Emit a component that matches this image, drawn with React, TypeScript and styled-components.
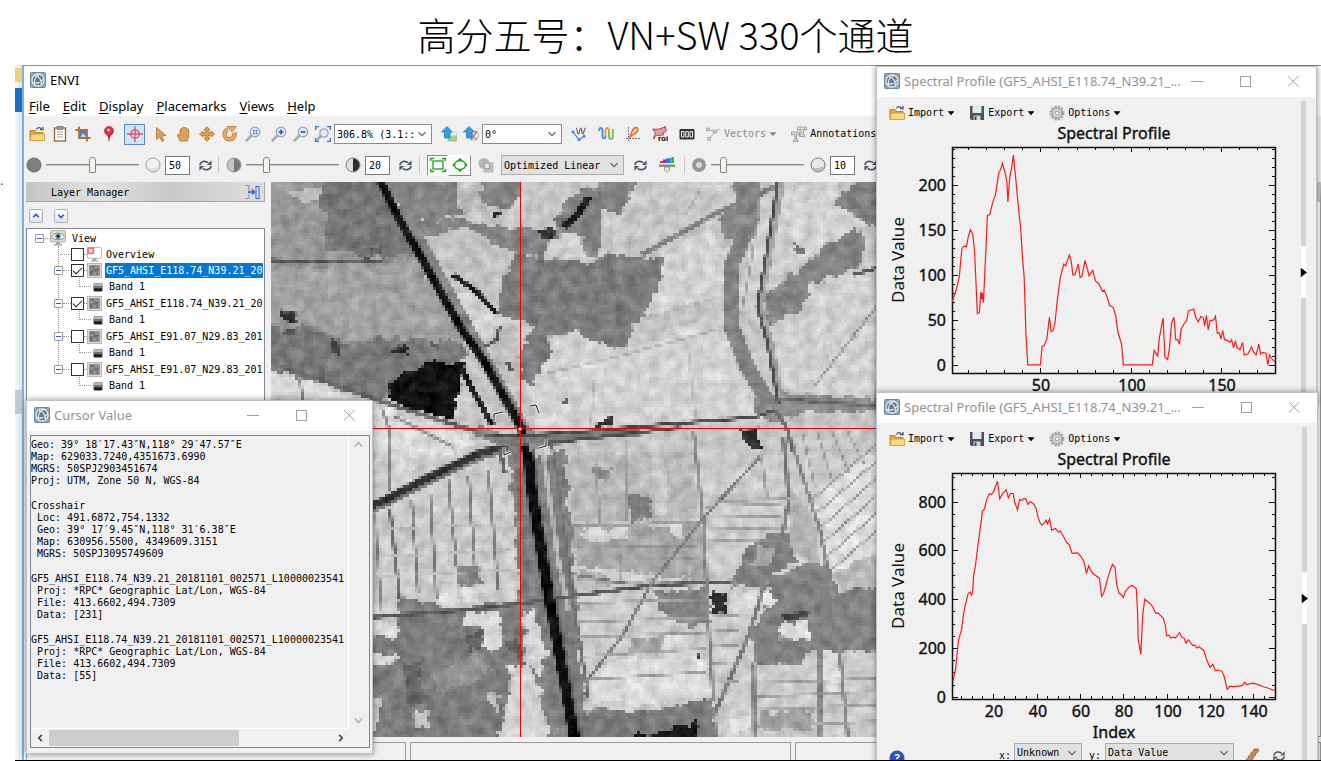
import React from "react";
import styled, { createGlobalStyle, css } from "styled-components";

const mono = `"DejaVu Sans Mono", "Liberation Mono", monospace`;
const sans = `"Noto Sans", "Open Sans", "Noto Sans CJK SC", sans-serif`;

const GlobalStyle = createGlobalStyle`
  * { box-sizing: border-box; }
  body { margin: 0; background: #fff; color: #000; font-family: ${sans}; }
  button, input, select { font: inherit; color: inherit; margin: 0; padding: 0; }
  ul { list-style: none; margin: 0; padding: 0; }
`;

/* ---------- page ---------- */

const Slide = styled.main`
  display: grid;
  grid-template-rows: 65px minmax(0, 1fr);
  height: 100vh;
  overflow: hidden;
`;

const SlideTitle = styled.h1`
  margin: 0;
  padding: 6px 0 0 10px;
  text-align: center;
  font-family: "Noto Sans CJK SC", sans-serif;
  font-weight: 300;
  font-size: 38px;
  line-height: 56px;
`;

const Stage = styled.div`
  display: grid;
  grid-template-columns: 15px minmax(0, 1fr);
  min-height: 0;
`;

const Margin = styled.div`
  padding-top: 108px;
  color: #1a1ae0;
  font-size: 12px;
  line-height: 16px;
`;

const Desktop = styled.div`
  position: relative;
  display: flex;
  min-height: 0;
  border-bottom: 1px solid #000;
  overflow: hidden;
`;

const BackStrip = styled.div`
  display: flex;
  flex-direction: column;
  flex: none;
  width: 7px;
  background: linear-gradient(90deg, #f6f8f9, #dfe4e8);
`;

const StripBlock = styled.div<{ $h: number; $c?: string }>`
  height: ${(p) => p.$h}px;
  background: ${(p) => p.$c ?? "transparent"};
`;

/* ---------- main window ---------- */

const MainWindow = styled.section`
  display: flex;
  flex-direction: column;
  flex: 1;
  min-width: 0;
  border-top: 1px solid #5f9fd6;
  border-left: 2px solid #78b3e4;
  background: #f0f0f0;
`;

const MainTitle = styled.header`
  display: flex;
  align-items: center;
  gap: 4px;
  flex: none;
  height: 28px;
  padding-left: 6px;
  background: #fff;
  font-size: 13px;
`;

const MenuBar = styled.nav`
  display: flex;
  align-items: center;
  gap: 13px;
  flex: none;
  height: 22px;
  padding: 3px 0 0 5px;
  background: #fff;
`;

const MenuItem = styled.button`
  border: 0;
  background: none;
  font-size: 13px;
  line-height: 19px;
  u { text-underline-offset: 2px; }
`;

const Toolbar = styled.div<{ $h: number; $bottom?: number }>`
  display: flex;
  align-items: center;
  flex: none;
  height: ${(p) => p.$h}px;
  padding: 0 0 ${(p) => p.$bottom ?? 0}px 1px;
  overflow: hidden;
  font-family: ${mono};
  font-size: 10px;
`;

const ToolGroup = styled.div<{ $before?: number }>`
  display: flex;
  align-items: center;
  flex: none;
  margin-left: ${(p) => p.$before ?? 0}px;
`;

const ToolButton = styled.button<{ $w?: number; $look?: "active" | "sunken" | "raised" }>`
  display: grid;
  place-items: center;
  flex: none;
  width: ${(p) => p.$w ?? 23}px;
  height: 21px;
  border: 1px solid transparent;
  background: none;
  ${(p) => p.$look === "active" && css`border-color: #5b8fbf; background: #cce4f7;`}
  ${(p) => p.$look === "sunken" && css`border-color: #8c8c8c #fff #fff #8c8c8c; background: #fafafa;`}
  ${(p) => p.$look === "raised" && css`border-color: #fff #8c8c8c #8c8c8c #fff; background: #fafafa;`}
`;

const LabelButton = styled.button<{ $muted?: boolean }>`
  display: flex;
  align-items: center;
  flex: none;
  gap: 3px;
  border: 0;
  background: none;
  color: ${(p) => (p.$muted ? "#8a8a8a" : "#000")};
  font-family: ${mono};
  font-size: 10px;
  line-height: 16px;
  white-space: nowrap;
`;

const Separator = styled.span`
  width: 1px;
  height: 16px;
  flex: none;
  background: #c4c4c4;
`;

const SelectBox = styled.label<{ $w: number; $gray?: boolean }>`
  display: grid;
  grid-template-columns: minmax(0, 1fr) 16px;
  align-items: center;
  flex: none;
  width: ${(p) => p.$w}px;
  height: 20px;
  border: 1px solid ${(p) => (p.$gray ? "#adadad" : "#8a8a8a")};
  background: ${(p) => (p.$gray ? "#e1e1e1" : "#fff")};
  select {
    grid-area: 1 / 1 / 2 / 3;
    width: 100%;
    height: 18px;
    padding-left: 2px;
    border: 0;
    background: none;
    appearance: none;
    font-family: ${mono};
    font-size: 10px;
  }
  svg { grid-area: 1 / 2; pointer-events: none; }
`;

const NumberField = styled.input`
  width: 25px;
  height: 19px;
  flex: none;
  padding-left: 3px !important;
  border: 1px solid #7a7a7a;
  background: #fff;
  font-family: ${mono};
  font-size: 10px !important;
`;

const Range = styled.input`
  appearance: none;
  width: 93px;
  height: 18px;
  flex: none;
  background: none;
  &::-webkit-slider-runnable-track {
    height: 2px;
    background: #8d8b80;
    border-bottom: 1px solid #c9c8c0;
  }
  &::-webkit-slider-thumb {
    appearance: none;
    width: 7px;
    height: 16px;
    margin-top: -7px;
    border: 1px solid #85867d;
    border-radius: 3px 3px 1px 1px;
    background: #f4f3ec;
  }
`;

const Workspace = styled.div`
  display: grid;
  grid-template-columns: 239px minmax(0, 1fr) 240px;
  column-gap: 6px;
  flex: 1;
  min-height: 0;
  padding-left: 2px;
`;

const LayerPanel = styled.aside`
  display: flex;
  flex-direction: column;
  min-height: 0;
  font-family: ${mono};
  font-size: 10px;
`;

const PanelHeader = styled.div`
  display: flex;
  align-items: center;
  justify-content: space-between;
  flex: none;
  height: 20px;
  padding: 1px 4px 0 25px;
  border-bottom: 1px solid #a6a6a6;
  border-right: 1px solid #a6a6a6;
  background: linear-gradient(90deg, #c4c4c4, #e2e2e2 30%, #c9c9c9 60%, #dedede);
`;

const OrderButtons = styled.div`
  display: flex;
  align-items: center;
  gap: 11px;
  flex: none;
  height: 26px;
  padding: 2px 0 0 3px;
`;

const OrderButton = styled.button`
  display: grid;
  place-items: center;
  width: 14px;
  height: 14px;
  border: 1px solid #a9b2bd;
  border-radius: 2px;
  background: linear-gradient(#fff, #dfe5ee);
`;

const Tree = styled.div`
  flex: 1;
  min-height: 0;
  overflow: hidden;
  border: 1px solid #828790;
  background: #fff;
  padding: 1px 1px 0 8px;
`;

const TreeRow = styled.div<{ $h?: number }>`
  display: flex;
  align-items: center;
  height: ${(p) => p.$h ?? 16}px;
`;

const Branch = styled.ul`
  position: relative;
  padding-left: 19px;
  &::before {
    content: "";
    position: absolute;
    left: 23px;
    top: 0;
    height: 124px;
    border-left: 1px dotted #999;
  }
`;

const Expander = styled.button`
  position: relative;
  width: 9px;
  height: 9px;
  flex: none;
  border: 1px solid #9a9a9a;
  border-radius: 1px;
  background: #fff;
  &::after {
    content: "";
    position: absolute;
    inset: 3px 1px;
    background: #3c5fae;
  }
`;

const Dots = styled.span<{ $w: number; $before?: number }>`
  width: ${(p) => p.$w}px;
  flex: none;
  margin-left: ${(p) => p.$before ?? 0}px;
  border-top: 1px dotted #999;
`;

const Elbow = styled.span`
  align-self: flex-start;
  width: 12px;
  height: 9px;
  margin: 0 2px 0 25px;
  border: 1px dotted #999;
  border-width: 0 0 1px 1px;
`;

const Tick = styled.input`
  appearance: none;
  display: grid;
  place-items: center;
  width: 13px;
  height: 13px;
  flex: none;
  border: 1px solid #333;
  background: #fff;
  &:checked::after {
    content: "";
    width: 8px;
    height: 4px;
    margin-bottom: 2px;
    border: 1px solid #222;
    border-width: 0 0 1px 1px;
    transform: rotate(-45deg);
  }
`;

const LayerName = styled.label<{ $on?: boolean }>`
  flex: 1;
  min-width: 0;
  overflow: hidden;
  white-space: nowrap;
  line-height: 15px;
  margin-left: 3px;
  padding-left: 1px;
  ${(p) => p.$on && css`background: #0078d7; color: #fff;`}
`;

const NodeName = styled.span`
  margin-left: 6px;
`;

const MapView = styled.figure`
  margin: 0;
  min-height: 0;
  overflow: hidden;
  background: #aaa;
  svg { display: block; width: 100%; height: 100%; }
`;

const ToolboxPanel = styled.aside`
  border: 1px solid #9a9a9a;
  border-top: 20px solid #c6c6c6;
  background: #fff;
`;

const StatusBar = styled.footer`
  display: grid;
  grid-template-columns: 380px 381px minmax(0, 1fr);
  gap: 4px;
  flex: none;
  height: 23px;
  padding: 5px 0 0 2px;
`;

const StatusCell = styled.div`
  border: 1px solid #9b9b9b;
  border-bottom: 0;
`;

/* ---------- floating windows ---------- */

const FloatWindow = styled.section<{ $top: number; $left?: number; $right?: number; $w: number; $h: number }>`
  position: absolute;
  display: flex;
  flex-direction: column;
  top: ${(p) => p.$top}px;
  ${(p) => p.$left !== undefined && css`left: ${p.$left}px;`}
  ${(p) => p.$right !== undefined && css`right: ${p.$right}px;`}
  width: ${(p) => p.$w}px;
  height: ${(p) => p.$h}px;
  overflow: hidden;
  border: 1px solid #c2c2c2;
  background: #f0f0f0;
  box-shadow: 0 0 6px rgba(0, 0, 0, 0.45);
`;

const FloatTitle = styled.header`
  display: flex;
  align-items: center;
  flex: none;
  height: 30px;
  padding: 0 15px 2px 7px;
  background: #fff;
  color: #929292;
  font-size: 13px;
  line-height: 18px;
  white-space: nowrap;
  h2 { flex: 1; min-width: 0; margin: 0 0 0 4px; font: inherit; }
`;

const CaptionButtons = styled.div`
  display: flex;
  gap: 32px;
`;

const CaptionButton = styled.button`
  display: grid;
  place-items: center;
  width: 16px;
  height: 16px;
  border: 0;
  background: none;
  color: #a0a0a0;
`;

const Readout = styled.div`
  display: grid;
  grid-template: minmax(0, 1fr) 18px / minmax(0, 1fr) 20px;
  flex: 1;
  min-height: 0;
  margin: 4px 2px 5px 3px;
  border: 1px solid #828790;
`;

const ReadoutText = styled.div`
  display: flex;
  flex-direction: column;
  gap: 13px;
  overflow: hidden;
  padding: 3px 0 0 0;
  border-right: 1px solid #fff;
  border-bottom: 1px solid #fff;
  font-family: ${mono};
  font-size: 10px;
  line-height: 12px;
  white-space: pre;
`;

const SideScroll = styled.div`
  display: flex;
  flex-direction: column;
  justify-content: space-between;
  align-items: center;
  padding: 4px 2px 4px 0;
`;

const BottomScroll = styled.div`
  display: grid;
  grid-template-columns: 18px minmax(0, 1fr) 16px;
  align-items: center;
  justify-items: center;
`;

const ScrollThumb = styled.div`
  justify-self: start;
  width: 67%;
  height: 16px;
  background: #cdcdcd;
`;

const ProfileBody = styled.div`
  display: flex;
  flex: 1;
  min-height: 0;
`;

const ProfileMain = styled.div`
  flex: 1;
  min-width: 0;
  svg.plot { display: block; }
`;

const ProfileTools = styled.div`
  display: flex;
  align-items: center;
  gap: 14px;
  height: 25px;
  padding: 7px 0 0 12px;
`;

const Sash = styled.div`
  display: flex;
  flex-direction: column;
  flex: none;
  width: 5px;
  margin: 4px 10px 0 0;
  background: #d2d2d2;
`;

const SashHandle = styled.button`
  display: grid;
  place-content: center;
  width: 5px;
  height: 52px;
  margin-top: 145px;
  border: 0;
  background: #fff;
`;

const ProfileFooter = styled.div`
  display: flex;
  align-items: flex-start;
  padding-left: 12px;
  font-family: ${mono};
  font-size: 10px;
`;

const FooterPart = styled.span<{ $before: number; $top?: number }>`
  margin-left: ${(p) => p.$before}px;
  margin-top: ${(p) => p.$top ?? 6}px;
  line-height: 14px;
  display: flex;
`;

/* ---------- icons ---------- */

type IconName =
  | "logo" | "folder" | "clip" | "crop" | "pin" | "cross" | "arrow" | "hand" | "move" | "rotate"
  | "zoomBox" | "zoomIn" | "zoomOut" | "zoomFit" | "upImg" | "upNorth" | "specW" | "wave" | "scatter"
  | "roi" | "digits" | "vector" | "annot" | "refresh" | "rect" | "ellipse" | "gray" | "histo"
  | "disc" | "discLight" | "halfL" | "halfR" | "ring" | "discMid" | "chevron" | "dock" | "up" | "down"
  | "eye" | "overview" | "raster" | "band" | "save" | "gear" | "caret" | "help" | "brush"
  | "min" | "max" | "close" | "play" | "left" | "right" | "scrollUp" | "scrollDown";

const lens = (
  <>
    <path d="M1.500 14.500 6.500 9.500" stroke="#a9adb2" strokeWidth="2.600" strokeLinecap="round" />
    <circle cx="10" cy="6" r="4.800" fill="#dfeafc" stroke="#9aa3ad" strokeWidth="1.200" />
  </>
);

const art: Record<IconName, React.ReactNode> = {
  logo: (
    <>
      <rect x="0.5" y="0.5" width="15" height="15" rx="1" fill="#8fa6b5" stroke="#6f899a" />
      <circle cx="8" cy="8" r="6" fill="#5f7d91" stroke="#dfe8ee" strokeWidth="1.300" />
      <path d="M2.500 10.500C6 12 11 10.500 13.500 7M4.500 12.500C4 8 6 4 9.500 2.500M5 4c4 0 6.500 3.500 6.500 8.500" fill="none" stroke="#e9f0f4" strokeWidth="1.100" />
    </>
  ),
  folder: (
    <>
      <path d="M7.500 3.500c1-2.500 4-2.500 5 0M11 3.500h3V1" fill="none" stroke="#44566b" strokeWidth="1.300" />
      <path d="M1 14V4.500h5l1.500 2H14V14z" fill="#dca93c" stroke="#b98724" />
      <path d="M1 14.500 2 8H15.500V14.500z" fill="#f8d983" stroke="#c8962f" strokeWidth="0.800" />
    </>
  ),
  clip: (
    <>
      <rect x="2.500" y="2" width="11" height="13" fill="#fdfdfd" stroke="#9c6b3f" strokeWidth="1.400" />
      <rect x="5" y="0.500" width="6" height="3" fill="#999" stroke="#666" strokeWidth="0.600" />
      <path d="M5 6h6M5 8.500h6M5 11h6" stroke="#aaa" />
    </>
  ),
  crop: (
    <>
      <rect x="4.500" y="4.500" width="8" height="7" fill="#4d7fc0" />
      <path d="M5 11.500 8 7l4 4.500z" fill="#bcd8f0" />
      <path d="M0.500 4H12V15.500M4 0.500V12H15.500" fill="none" stroke="#a5703d" strokeWidth="1.800" />
    </>
  ),
  pin: (
    <>
      <path d="M8 8v7.500" stroke="#999" strokeWidth="1.600" />
      <circle cx="8" cy="5" r="4.600" fill="#e0323c" stroke="#b32029" strokeWidth="0.600" />
      <path d="M6 9h4l-2 5z" fill="#d02c36" />
      <circle cx="7.500" cy="4" r="1.500" fill="#f7c4c6" />
    </>
  ),
  cross: (
    <>
      <circle cx="8" cy="8" r="4.200" fill="none" stroke="#e0525c" strokeWidth="1.300" />
      <path d="M8 0v16M0 8h16" stroke="#e0525c" strokeWidth="1.300" />
    </>
  ),
  arrow: <path d="M3.500 1.500v12l3-2.500 2.500 4.500 2-1.200-2.300-4.300 4.300-.5z" fill="#dba15c" stroke="#a97336" strokeWidth="0.800" />,
  hand: <path d="M4 15C3 12 1 10 1.500 8.500 3 8 3.500 9 4 9.500L4 3.500C5 2.300 6 3 6 3.500V2C7 .8 8 1.300 8.200 2V1.800C9.500.8 10.300 1.500 10.400 3 11.500 2.200 12.600 3 12.700 4V10c0 2-1 3-1.400 5z" fill="#dfa15a" stroke="#b07536" strokeWidth="0.800" />,
  move: <path d="M8 .5 11 4H9.300v2.700H12V5l3.500 3L12 11V9.300H9.300V12H11l-3 3.500L5 12h1.700V9.300H4V11L.5 8 4 5v1.700h2.700V4H5z" fill="#e0a04f" stroke="#a96d2a" strokeWidth="0.800" />,
  rotate: (
    <>
      <path d="M12.300 6.500a5 5 0 1 1-6.500-3" fill="none" stroke="#b97a35" strokeWidth="4.400" />
      <path d="M12.300 6.500a5 5 0 1 1-6.500-3" fill="none" stroke="#e5ac66" strokeWidth="2.800" />
      <path d="M5 .5h9.500L10 6z" fill="#e5ac66" stroke="#b97a35" strokeWidth="0.800" />
      <circle cx="8" cy="8" r="2" fill="#f8ead6" />
    </>
  ),
  zoomBox: <>{lens}<path d="M8 4h1.500v1.500H8zM10.700 4h1.500v1.500h-1.500zM8 6.700h1.500v1.500H8zM10.700 6.700h1.500v1.500h-1.500z" fill="#2b5fc0" /></>,
  zoomIn: <>{lens}<path d="M10 3.500v5M7.500 6h5" stroke="#2b50b8" strokeWidth="1.600" /></>,
  zoomOut: <>{lens}<path d="M7.500 6h5" stroke="#2b50b8" strokeWidth="1.600" /></>,
  zoomFit: (
    <>
      <path d="M3 13 6 10" stroke="#a9adb2" strokeWidth="2.600" strokeLinecap="round" />
      <circle cx="9" cy="7" r="4.200" fill="#dfeafc" stroke="#9aa3ad" strokeWidth="1.200" />
      <path d="M.7 4V.7H4M12 .7h3.300V4M15.300 12v3.300H12M4 15.300H.7V12" fill="none" stroke="#2b6fdc" strokeWidth="1.300" />
    </>
  ),
  upImg: (
    <>
      <rect x="7" y="7" width="8.500" height="8" fill="#a9cf7c" stroke="#8aa" strokeWidth="0.600" />
      <path d="M7 10c3-2 6 1 8.500-1V7H7z" fill="#e6eaf0" />
      <path d="M6 .5 11.500 6H9v6H3.500V6H.5z" fill="#2f9fe0" stroke="#1e78b8" strokeWidth="0.700" />
    </>
  ),
  upNorth: (
    <>
      <circle cx="11" cy="9.500" r="4.500" fill="#e8edf2" stroke="#9ab" strokeWidth="0.800" />
      <path d="M8 14l6-9" stroke="#d9534f" strokeWidth="1.300" />
      <path d="M14 14 9 8" stroke="#6b7a88" />
      <path d="M6 .5 11.500 6H9v6H3.500V6H.5z" fill="#2f9fe0" stroke="#1e78b8" strokeWidth="0.700" />
    </>
  ),
  specW: (
    <>
      <path d="M5 2c1.500 0 1 6 2.500 6S8.500 2 9.700 2s1 6 2.300 6 .500-6 3-6" fill="none" stroke="#666" strokeWidth="1.200" />
      <path d="M2 6 8 14l5-4" fill="none" stroke="#3d7be0" strokeWidth="1.200" />
      <path d="M.8 4.800h2.400v2.400H.8zM6.800 12.600h2.400V15H6.800zM12 9h2.400v2.400H12z" fill="#3d7be0" />
    </>
  ),
  wave: (
    <>
      <path d="M1 5c0-4 3.500-4 3.500 0v5c0 3 3 3 3 0" fill="none" stroke="#4b8fe0" strokeWidth="1.900" />
      <path d="M7.500 10V5c0-4 3.500-4 3.500 0" fill="none" stroke="#e7a13a" strokeWidth="1.900" />
      <path d="M11 5v5c0 4 3.800 4 3.800 0V3" fill="none" stroke="#7bbf4a" strokeWidth="1.900" />
    </>
  ),
  scatter: (
    <>
      <path d="M3.500 1v14M1 12.500h14" stroke="#777" strokeDasharray="2 1" />
      <path d="M4.500 11.500C6 9 7 2 10.500 1.500c3 0 3 3 1 5s-4.500 2-7 5z" fill="#fbd58c" stroke="#e4612d" strokeWidth="1.300" />
    </>
  ),
  roi: (
    <>
      <path d="M1.500 3.500 7 3l6-2 1.500 4-3.500 2 .5 2-6.500.5-3 1.500 1.500-4z" fill="#e79ba3" stroke="#b8505c" strokeWidth="1" />
      <path d="M.5 2.500h2v2h-2zM12 .2h2v2h-2zM1 11h2v2H1z" fill="#b8505c" />
      <text x="6" y="15" fontSize="8" fontWeight="700" fontFamily="Liberation Sans, sans-serif">roi</text>
    </>
  ),
  digits: (
    <>
      <rect x="0.500" y="3" width="15" height="10.500" rx="1" fill="#333" />
      <path d="M2.500 5.500h2.500v5.500H2.500zM6.800 5.500h2.500v5.500H6.800zM11 5.500h2.500v5.500H11z" fill="none" stroke="#f4f4f4" />
    </>
  ),
  vector: (
    <>
      <path d="M3 3.500 10 5.500 4 13M10 5.500 14.500 3" fill="none" stroke="#aaa" />
      <path d="M1.700 2.200h2.600v2.600H1.700zM8.700 4.200h2.600v2.600H8.700zM2.700 11.500h2.600v2.600H2.700z" fill="#f4f4f4" stroke="#999" />
    </>
  ),
  annot: <path d="M6.500 1h9v3h-2V3h-1.200v6h1.200v1.500H8.700V9h1.200V3H8.500v1h-2zM.5 6h8v3H7V8H5.500v6H7v1.500H2.500V14H4V8H2v1H.5z" fill="#e6e6e6" stroke="#8c8c8c" strokeWidth="0.800" />,
  refresh: (
    <>
      <path d="M2 7.500C2.500 4 7 2 11 5" fill="none" stroke="#4d5666" strokeWidth="1.800" />
      <path d="M14 8.500C13.500 12 9 14 5 11" fill="none" stroke="#4d5666" strokeWidth="1.800" />
      <path d="M14.500 2.500V7.500H9.500zM1.500 13.500V8.500H6.500z" fill="#4d5666" />
    </>
  ),
  rect: (
    <>
      <rect x="3" y="4" width="10" height="8" fill="none" stroke="#1fa51f" strokeWidth="1.300" />
      <path d="M.7 4V1.500H4M12 1.500h3.300V4M15.300 12v2.500H12M4 14.500H.7V12" fill="none" stroke="#1fa51f" strokeWidth="1.400" />
    </>
  ),
  ellipse: (
    <>
      <ellipse cx="8" cy="8" rx="5.500" ry="4.500" fill="none" stroke="#1fa51f" strokeWidth="1.400" />
      <path d="M6 3 8 .8 10 3zM6 13l2 2.200L10 13zM2.300 6v4L.3 8zM13.700 6v4l2-2z" fill="#1fa51f" />
    </>
  ),
  gray: (
    <>
      <circle cx="6" cy="6.500" r="5.500" fill="#b4b4b4" />
      <path d="M7 5h8.500v10.500H5z" fill="#bdbdbd" />
      <circle cx="9" cy="9" r="3" fill="#e4e4e4" stroke="#999" />
    </>
  ),
  histo: (
    <>
      <path d="M1 6V4h3v2z" fill="#e33" /><path d="M4 6V2.500h3V6z" fill="#e0a" />
      <path d="M7 6V1.500h3V6z" fill="#2b6fdc" /><path d="M10 6V1h2.500v5z" fill="#18a0d0" /><path d="M12.500 6V0H15v6z" fill="#3b3" />
      <path d="M0 7.500h16v2.500H0z" fill="#8b8b8b" />
      <path d="M5.500 10h5v3L8 15.500 5.500 13z" fill="#e5e5e5" stroke="#888" strokeWidth="0.800" />
    </>
  ),
  disc: <circle cx="8" cy="8" r="7" fill="#808080" stroke="#6a6a6a" />,
  discLight: <><circle cx="8" cy="8" r="7" fill="#f4f4f4" stroke="#9a9a9a" /><path d="M2 10a6.300 6.300 0 0 0 12-1C10 12 5 12 2 10z" fill="#dcdcdc" /></>,
  halfL: <><circle cx="8" cy="8" r="7" fill="#c4c4c4" stroke="#909090" /><path d="M8 1.500a6.500 6.500 0 0 1 0 13z" fill="#777" /></>,
  halfR: <><circle cx="8" cy="8" r="7" fill="#e0e0e0" stroke="#808080" /><path d="M8 1.500a6.500 6.500 0 0 1 0 13z" fill="#2c2c34" /></>,
  ring: <circle cx="8" cy="8" r="5" fill="#d8d8d8" stroke="#979797" strokeWidth="4" />,
  discMid: <><circle cx="8" cy="8" r="7" fill="#e8e8e8" stroke="#777" /><path d="M2 10a6.300 6.300 0 0 0 12-1C10 11 5 12 2 10z" fill="#bbb" /></>,
  chevron: <path d="M4 6l4 4 4-4" fill="none" stroke="#666" strokeWidth="1.400" />,
  dock: (
    <>
      <path d="M1 1.500h4v13H1M5 4V1.500" fill="none" stroke="#999" />
      <path d="M4 8h6M8 5.500 10.500 8 8 10.500" fill="none" stroke="#3a62c8" strokeWidth="1.600" />
      <rect x="12" y="2.500" width="3" height="12" fill="#dfe8fb" stroke="#3a62c8" />
    </>
  ),
  up: <path d="M3.500 10 8 5.500l4.500 4.500" fill="none" stroke="#2f55b8" strokeWidth="2.600" />,
  down: <path d="M3.500 6 8 10.500 12.500 6" fill="none" stroke="#2f55b8" strokeWidth="2.600" />,
  scrollUp: <path d="M1.500 12 8 4l6.500 8" fill="none" stroke="#b4b4b4" strokeWidth="3" />,
  scrollDown: <path d="M1.500 4 8 12l6.500-8" fill="none" stroke="#b4b4b4" strokeWidth="3" />,
  eye: (
    <>
      <rect x="0.500" y="0.500" width="15" height="11.500" rx="1" fill="#ddd8cc" stroke="#bbb6aa" />
      <path d="M1.500 7C4 2 12 2 14.500 7 12 10.500 4 10.500 1.500 7z" fill="#fff" stroke="#777" strokeWidth="0.800" />
      <circle cx="8" cy="6.300" r="2.800" fill="#5c95a8" /><circle cx="8" cy="6.300" r="1.200" fill="#111" />
      <path d="M6 12h4v2H6zM4 14h8v1.500H4z" fill="#aaa" />
    </>
  ),
  overview: (
    <>
      <rect x="0.500" y="0.500" width="15" height="11.500" rx="1" fill="#fff" stroke="#bbb0a8" />
      <rect x="1.200" y="1.200" width="5.600" height="5.600" fill="#ffe97a" stroke="#f06292" strokeWidth="1.600" />
      <path d="M6 12h4v2H6zM4 14h8v1.500H4z" fill="#aaa" />
    </>
  ),
  raster: (
    <>
      <rect x="0.500" y="0.500" width="15" height="15" fill="#ddd" stroke="#b5b5b5" />
      <rect x="2.500" y="2.500" width="11" height="11" fill="#707070" />
      <path d="M3 5h4v3H3zM8 3h5v3H8zM6 9h4v4H6zM11 8h2v4h-2z" fill="#929292" />
    </>
  ),
  band: (
    <>
      <rect x="1" y="2" width="14" height="13" rx="2" fill="#222" />
      <path d="M3 2h10a2 2 0 0 1 2 2v3H1V4a2 2 0 0 1 2-2z" fill="#b8b8b8" />
      <path d="M1 7h14v3H1z" fill="#777" />
    </>
  ),
  save: (
    <>
      <path d="M1 1h14v14H2.500L1 13.500z" fill="#4b5157" />
      <rect x="3.500" y="1" width="9" height="7" fill="#dfeaf3" />
      <rect x="4.500" y="10.500" width="7" height="4.500" fill="#d8d8d8" /><path d="M5.500 11.500h2V15h-2z" fill="#444" />
    </>
  ),
  gear: (
    <>
      <circle cx="8" cy="8" r="6.200" fill="none" stroke="#a4a4a4" strokeWidth="2.600" strokeDasharray="2.200 1.050" />
      <circle cx="8" cy="8" r="4.800" fill="#d6d6d6" stroke="#9b9b9b" />
      <circle cx="8" cy="8" r="2" fill="#f4f4f4" stroke="#9b9b9b" />
    </>
  ),
  caret: <path d="M1 4.500h14L8 12.500z" fill="currentColor" />,
  help: (
    <>
      <circle cx="8" cy="8" r="7.500" fill="#2950c8" />
      <text x="8" y="12" textAnchor="middle" fontSize="11" fontWeight="700" fill="#fff" fontFamily="Noto Sans, sans-serif">?</text>
    </>
  ),
  brush: <path d="M14.500 1H10L9 3.500 7 4.500 6.500 7l-2 1L4 10.500 2 11.500V15.500l4-1L7 12l2-1 .500-2.500 2-1L12 5l2-1z" fill="#c98648" stroke="#8f5525" strokeWidth="0.700" />,
  min: <path d="M2 8.500h12" stroke="currentColor" strokeWidth="1" />,
  max: <rect x="3.500" y="3.500" width="10" height="10" fill="none" stroke="currentColor" />,
  close: <path d="M3 3l10.500 10.500M13.500 3L3 13.500" stroke="currentColor" />,
  play: <path d="M4 1v14l9-7z" fill="#000" />,
  left: <path d="M11 3 6 8l5 5" fill="none" stroke="#444" strokeWidth="2.600" />,
  right: <path d="M5 3l5 5-5 5" fill="none" stroke="#444" strokeWidth="2.600" />,
};

const Icon = ({ name, size = 16 }: { name: IconName; size?: number }) => (
  <svg width={size} height={size} viewBox="0 0 16 16" aria-hidden="true">
    {art[name]}
  </svg>
);

const Tool = ({ icon, w, look, size }: { icon: IconName; w?: number; look?: "active" | "sunken" | "raised"; size?: number }) => (
  <ToolButton type="button" $w={w} $look={look} aria-label={icon}>
    <Icon name={icon} size={size} />
  </ToolButton>
);

const Select = ({ w, value, label, gray }: { w: number; value: string; label: string; gray?: boolean }) => (
  <SelectBox $w={w} $gray={gray}>
    <select aria-label={label} defaultValue={value}>
      <option>{value}</option>
    </select>
    <Icon name="chevron" size={14} />
  </SelectBox>
);

/* ---------- satellite view ---------- */

type Line = [color: string, width: number, points: string];
type Patch = [color: string, points: string];

const northPatches: Patch[] = [
  ["#c6c6c6", "-100,-100 2300,-100 2300,1000 -100,1000"],
  ["#989898", "-60,-60 150,-60 160,210 380,215 420,300 505,470 520,520 310,660 -60,540"],
  ["#777", "150,-60 260,-60 345,120 385,225 300,235 160,205 145,60"],
  ["#858585", "270,-60 480,-60 500,100 420,130 360,110"],
  ["#bcbcbc", "50,45 105,12 150,30 145,70 110,75"],
  ["#a2a2a2", "-60,262 300,262 365,225 420,310 490,440 480,480 340,470 200,480 120,430 -60,420"],
  ["#797979", "-60,445 100,440 200,485 340,478 500,482 515,520 330,640 280,655 -60,545"],
  ["#828282", "550,-60 670,-60 650,60 600,85 550,60"],
  ["#b8b8b8", "490,20 550,15 560,80 510,100"],
  ["#828282", "380,130 490,120 570,130 650,150 700,190 720,235 600,200 490,150 400,170"],
  ["#808080", "650,140 740,150 760,60 830,30 870,60 850,230 720,215 640,190"],
  ["#828282", "850,-60 970,-60 925,60 900,105 850,90"],
  ["#d0d0d0", "715,200 760,160 815,170 815,235 740,225"],
  ["#d4d4d4", "870,110 905,130 895,190 865,160"],
  ["#c2c2c2", "430,180 480,145 560,160 620,260 590,380 540,320 480,280 410,200"],
  ["#7c7c7c", "640,220 720,235 830,250 870,220 960,240 1030,230 1010,320 980,350 1005,385 945,430 915,512 850,490 760,455 725,470 720,540 700,620 655,600 650,500 690,440 595,395 600,330"],
  ["#d2d2d2", "735,480 790,460 920,520 1080,440 1170,440 1200,560 1260,660 1240,710 1000,735 700,765 680,640"],
  ["#d2d2d2", "1030,220 1130,130 1170,200 1175,340 960,410 1000,340"],
  ["#888", "1190,-60 1260,-60 1270,80 1240,190 1170,180 1150,120 1200,70"],
  ["#d0d0d0", "1265,60 1300,50 1260,380 1215,390 1235,200"],
  ["#d2d2d2", "1340,20 1450,0 1480,70 1540,130 1470,170 1360,260 1280,320 1310,60"],
  ["#848484", "1275,350 1380,250 1450,180 1500,150 1530,180 1515,260 1450,290 1385,350 1370,390 1280,450"],
  ["#7f7f7f", "1450,60 1500,20 1560,-60 2100,-60 2100,130 1540,135 1500,100"],
  ["#d0d0d0", "1290,460 1400,400 1390,310 1480,280 1555,300 1560,660 1400,640 1310,620"],
  ["#8c8c8c", "1240,650 1320,640 1600,660 1600,690 1380,700 1300,730 1240,700"],
  ["#dcdcdc", "-60,560 130,610 290,680 500,760 540,790 400,870 -60,870"],
  ["#121212", "315,660 315,620 350,580 430,550 505,545 497,640 480,718 410,700 350,680"],
  ["#c4c4c4", "505,530 540,530 630,700 600,730 530,620"],
  ["#d2d2d2", "470,345 520,340 585,400 590,460 540,480"],
  ["#c0c0c0", "590,445 640,440 650,620 600,600 560,540"],
  ["#cbcbcb", "480,655 510,640 560,740 490,730"],
  ["#333", "38,392 85,388 85,425 40,428"],
  ["#2c2c2c", "335,490 375,500 360,525 330,520"],
  ["#2a2a2a", "578,98 600,90 610,115 590,125"],
  ["#333", "695,148 735,145 740,168 705,172"],
  ["#2c2c2c", "1205,745 1260,740 1265,815 1240,810"],
  ["#303030", "850,718 888,718 885,742 848,742"],
  ["#555", "270,210 290,210 290,235 265,230"],
  ["#444", "172,490 190,490 190,530 172,525"],
  ["#555", "415,480 435,480 435,500 415,500"],
  ["#555", "55,440 72,440 72,475 55,475"],
  ["#666", "760,665 775,665 775,682 762,682"],
  ["#6c6c6c", "1350,195 1385,200 1375,225 1350,215"],
  ["#d9d9d9", "-60,560 100,600 200,640 130,680 -60,680"],
];

const northLines: Line[] = [
  ["#5c5c5c", 12, "-10,240 120,246 300,246"],
  ["#8c8c8c", 12, "300,246 370,222"],
  ["#666", 12, "-10,540 150,602 290,662 450,722 600,775"],
  ["#858585", 34, "540,750 640,795 760,775"],
  ["#222", 13, "480,285 540,335 590,400"],
  ["#555", 8, "600,435 590,480 560,500"],
  ["#1f1f1f", 14, "500,560 530,630 580,735"],
  ["#868686", 34, "345,80 665,760 665,870"],
  ["#555", 24, "285,-20 345,125 400,235 500,445 560,545 655,745"],
  ["#101010", 18, "285,-20 345,125 400,235 500,445 560,545 655,745 672,880"],
  ["#202020", 18, "825,50 800,100 760,142"],
  ["#838383", 14, "960,225 1060,160 1150,100 1300,20"],
  ["#aaa", 6, "1110,30 1070,110"],
  ["#838383", 40, "1225,-20 1240,120 1192,250 1190,440 1230,560 1285,670"],
  ["#9a9a9a", 5, "1262,60 1240,250 1215,400"],
  ["#a5a5a5", 20, "1318,0 1262,380 1290,500 1312,660"],
  ["#505050", 8, "1312,-20 1275,250 1256,380 1282,490 1310,670"],
  ["#9a9a9a", 6, "1600,320 1400,620"],
  ["#b5b5b5", 6, "720,580 900,530 1150,450"],
  ["#b9b9b9", 5, "960,420 1160,350"],
  ["#bcbcbc", 5, "840,600 830,740"],
  ["#bcbcbc", 5, "1080,520 1100,720"],
  ["#bdbdbd", 5, "1420,460 1440,560"],
  ["#777", 24, "600,790 720,775 960,755"],
  ["#4c4c4c", 9, "560,770 760,760 1000,735 1250,712 1300,690"],
  ["#505050", 9, "720,790 900,765 1060,742"],
  ["#6c6c6c", 9, "1310,655 1400,665 1600,680"],
  ["#6a6a6a", 9, "1300,690 1330,740 1360,880"],
  ["#555", 10, "1500,285 1600,250"],
  ["#555", 12, "620,545 628,575"],
  ["#808080", 7, "90,600 95,660"],
  ["#8c8c8c", 8, "300,690 320,760 320,870"],
  ["#8c8c8c", 8, "330,710 480,800"],
];

const southPatches: Patch[] = [
  ["#cbcbcb", "-350,-80 2200,-80 2200,900 -350,900"],
  ["#808080", "430,-40 470,-80 600,-80 630,450 660,760 640,880 560,880 470,500"],
  ["#d5d5d5", "80,-40 140,10 150,60 85,120"],
  ["#b9b9b9", "600,-80 990,-80 1000,210 625,215"],
  ["#c9c9c9", "865,0 900,0 905,190 870,190"],
  ["#7d7d7d", "785,135 850,140 860,205 800,230"],
  ["#888", "670,50 740,50 740,80 680,80"],
  ["#a8a8a8", "620,225 1010,225 1030,400 640,400"],
  ["#d2d2d2", "650,240 790,230 790,265 655,275"],
  ["#d8d8d8", "915,225 950,225 950,260 915,260"],
  ["#d2d2d2", "620,345 830,370 980,385 770,400 640,360"],
  ["#838383", "865,420 1030,405 1035,520 970,525 900,495"],
  ["#828282", "1130,320 1180,260 1270,250 1290,330 1200,400 1330,330 1390,340 1420,420 1600,430 1600,610 1340,600 1300,640 1180,645 1150,560 1200,480 1210,410 1100,410"],
  ["#a8a8a8", "1180,290 1240,290 1200,350 1150,350"],
  ["#cccccc", "1020,160 1250,150 1240,250 1120,290 1100,370 1030,385"],
  ["#b4b4b4", "1270,120 1330,180 1380,330 1330,340 1270,280"],
  ["#dfdfdf", "1350,150 1600,-60 1600,290 1400,370"],
  ["#bababa", "1410,380 1480,330 1600,330 1600,410 1430,420"],
  ["#dedede", "1100,440 1180,420 1170,480 1090,490"],
  ["#dcdcdc", "1200,430 1245,440 1225,475 1200,470"],
  ["#282828", "1038,430 1088,430 1085,500 1040,498"],
  ["#484848", "1240,490 1340,485 1340,512 1250,514"],
  ["#ddd", "1245,520 1335,520 1335,570 1240,562"],
  ["#2a2a2a", "975,610 1008,610 1008,660 975,655"],
  ["#7d7d7d", "100,445 280,480 470,450 480,640 420,760 400,880 -60,880 -60,620 100,520"],
  ["#686868", "110,640 160,640 180,760 130,760"],
  ["#929292", "190,680 350,600 380,660 240,740"],
  ["#d9d9d9", "-60,520 98,518 95,560 -60,560"],
  ["#d4d4d4", "-60,615 105,615 105,640 -60,645"],
  ["#d0d0d0", "-60,740 40,740 45,840 -60,840"],
  ["#d9d9d9", "290,485 405,480 415,600 360,590 350,530 295,530"],
  ["#dedede", "230,405 275,400 275,455 230,455"],
  ["#dedede", "285,425 340,420 340,455 285,460"],
  ["#828282", "275,350 345,345 355,405 285,415"],
  ["#5c5c5c", "295,555 355,545 355,600 310,610"],
  ["#5c5c5c", "425,570 465,570 470,610 430,605"],
  ["#d2d2d2", "430,650 490,640 560,880 400,880 430,780"],
  ["#d2d2d2", "475,480 500,490 550,620 520,680 490,600"],
  ["#dbdbdb", "700,640 850,630 980,610 1030,640 1030,740 800,770 670,745"],
  ["#dbdbdb", "895,560 965,555 965,600 895,595"],
  ["#a5a5a5", "790,565 890,560 890,610 790,615"],
  ["#7a7a7a", "640,790 700,770 780,790 960,760 1040,740 1060,880 640,880"],
  ["#1a1a1a", "770,870 870,842 1000,818 980,880 770,880"],
  ["#e2e2e2", "1095,800 1155,800 1150,855 1100,850"],
  ["#a0a0a0", "1190,790 1340,780 1340,830 1190,840"],
  ["#dadada", "1375,600 1425,600 1425,720 1375,720"],
  ["#c0c0c0", "150,785 195,780 190,835 145,835"],
  ["#c0c0c0", "370,730 405,730 400,800 380,780"],
];

const southLines: Line[] = [
  ["#777", 34, "-60,205 60,155 200,82 350,12 480,-20"],
  ["#333", 20, "-60,205 60,150 200,78 350,8 480,-25"],
  ["#888", 8, "70,-60 75,120"],
  ["#6c6c6c", 10, "75,180 105,450"],
  ["#808080", 8, "140,150 160,430"],
  ["#808080", 8, "195,130 215,450"],
  ["#808080", 8, "250,90 275,350"],
  ["#808080", 8, "310,75 330,345"],
  ["#808080", 8, "370,60 400,420"],
  ["#8a8a8a", 6, "30,190 50,480"],
  ["#606060", 12, "405,0 420,70"],
  ["#777", 16, "455,0 490,450"],
  ["#b8b8b8", 14, "525,-60 580,330 610,480"],
  ["#707070", 9, "555,-60 600,250 625,460 670,740"],
  ["#5a5a5a", 11, "-60,508 280,482 460,462 640,436 860,406 1100,395"],
  ["#909090", 6, "620,285 1000,290"],
  ["#9a9a9a", 5, "620,320 1000,325"],
  ["#888", 6, "770,290 770,390"],
  ["#777", 7, "620,372 790,402"],
  ["#999", 6, "690,20 705,220"],
  ["#999", 6, "780,-60 785,210"],
  ["#999", 6, "620,228 1000,215"],
  ["#8c8c8c", 10, "985,-60 1015,210 1030,520 1045,750"],
  ["#7c7c7c", 9, "1185,20 1010,210 860,400 770,560 660,700"],
  ["#7c7c7c", 12, "1255,-40 1272,150 1250,270 1200,400 1150,560 1045,800"],
  ["#888", 10, "1275,-40 1365,240 1400,420 1420,560 1450,880"],
  ["#999", 7, "1190,20 1205,140"],
  ["#8a8a8a", 12, "1165,640 1170,880"],
  ["#858585", 14, "1365,600 1365,880"],
  ["#aaa", 6, "1020,160 1330,140"],
];

const darkRoad: Line[] = [
  ["#666", 40, "485,-60 500,120 552,430 594,650 640,900"],
  ["#0e0e0e", 30, "482,-60 500,120 550,430 590,650 635,900"],
];

const FieldRows = () => (
  <g stroke="#a0a0a0" strokeWidth="6">
    {[170, 205, 240, 275].map((y) => <path key={y} d={`M1025 ${y}L1250 ${y - 8}`} />)}
    {[460, 515, 560].map((y) => <path key={y} d={`M640 ${y}L1030 ${y - 12}`} />)}
    {[500, 545, 590, 640, 700].map((y) => <path key={y} d={`M1040 ${y}L1120 ${y - 5}`} />)}
    {[700, 740, 780, 830].map((y) => <path key={y} d={`M1175 ${y}L1540 ${y - 16}`} />)}
    {[620, 690].map((y) => <path key={y} d={`M650 ${y}L1020 ${y - 24}`} />)}
    {[0, 1, 2, 3, 4, 5].map((i) => <path key={i} d={`M${1340 + i * 12} ${150 + i * 42}L1560 ${-40 + i * 52}`} />)}
    {[0, 1, 2, 3].map((i) => <path key={i} d={`M${1310 + i * 45} -60L${1350 + i * 50} ${110 - i * 22}`} />)}
    {[240, 320, 380].map((y) => <path key={y} d={`M30 ${y}L440 ${y - 20}`} stroke="#bbb" />)}
  </g>
);

const drawPatches = (patches: Patch[]) =>
  patches.map(([fill, points]) => <polygon key={points} fill={fill} points={points} />);

const drawLines = (lines: Line[]) =>
  lines.map(([stroke, w, points]) => (
    <polyline key={points} fill="none" stroke={stroke} strokeWidth={w} strokeLinejoin="round" points={points} />
  ));

const south = "translate(94 268) scale(0.3333)";
const north = "translate(-6 -2) scale(0.392 0.3333)";

const SatelliteMap = () => (
  <svg role="img" aria-label="Satellite image">
    <defs>
      <filter id="ragged" filterUnits="userSpaceOnUse" x="-20" y="-20" width="1500" height="900" colorInterpolationFilters="sRGB">
        <feTurbulence type="fractalNoise" baseFrequency="0.07" numOctaves="3" seed="3" />
        <feDisplacementMap in="SourceGraphic" scale="14" xChannelSelector="R" yChannelSelector="G" />
      </filter>
      <filter id="pixels" filterUnits="userSpaceOnUse" x="0" y="0" width="1500" height="900" colorInterpolationFilters="sRGB">
        <feTurbulence type="fractalNoise" baseFrequency="0.09" numOctaves="3" seed="8" />
        <feColorMatrix values="1 0 0 0 0  1 0 0 0 0  1 0 0 0 0  0 0 0 0 1" result="noise" />
        <feComposite in="SourceGraphic" in2="noise" operator="arithmetic" k2="1" k3="0.26" k4="-0.13" result="grained" />
        <feFlood x="1" y="1" width="1" height="1" floodColor="#000" result="dot" />
        <feOffset in="dot" x="0" y="0" width="3" height="3" dx="0" dy="0" />
        <feTile result="dots" />
        <feComposite in="grained" in2="dots" operator="in" />
        <feMorphology operator="dilate" radius="1" />
      </filter>
      <clipPath id="north"><rect x="-20" y="-20" width="1500" height="291" /></clipPath>
    </defs>
    <g filter="url(#pixels)">
      <g filter="url(#ragged)">
        <g transform={south}>{drawPatches(southPatches)}</g>
        <g clipPath="url(#north)"><g transform={north}>{drawPatches(northPatches)}</g></g>
      </g>
      <g transform={south}>
        {drawLines(southLines)}
        <FieldRows />
        {drawLines(darkRoad)}
      </g>
      <g clipPath="url(#north)"><g transform={north}>{drawLines(northLines)}</g></g>
    </g>
    <g fill="#f00000" shapeRendering="crispEdges">
      <rect x="249" y="0" width="1" height="100%" />
      <rect x="0" y="246" width="100%" height="1" />
    </g>
    <circle cx="249" cy="247" r="2" fill="#fff" stroke="#c00" />
    <g fill="none">
      <path d="M223 239v-7l9-2M259 224l6-1 3 8M233 265v8l7-3M275 257v7l-7 2" stroke="#eee" strokeWidth="3" />
      <path d="M223 239v-7l9-2M259 224l6-1 3 8M233 265v8l7-3M275 257v7l-7 2" stroke="#111" />
    </g>
  </svg>
);

/* ---------- spectral plots ---------- */

type Plot = {
  xMax: number;
  xStep: number;
  xMinor: number;
  yStep: number;
  yMinor: number;
  yMin: number;
  yMax: number;
  xTitle?: string;
  data: number[];
};

const upper: Plot = {
  xMax: 180, xStep: 50, xMinor: 10, yStep: 50, yMinor: 10, yMin: -9, yMax: 242,
  data: [1,70,3,81,5,97,6.5,129,7.6,132,9,131,10,142,11.2,150,12.5,145,13.5,125,14.5,81,15,57,16.2,58,17,81,17.5,73,17.8,80,18.4,69,19.5,116,20.6,166,22,167,23.6,181,25,188,27,214,28,217,29,224,30.6,212,31.4,203,32,181,33,208,34,218,35,233,36.5,203,38,170,39,153,40,121,41,97,42,33,43,0,50,0,51,21,52,21,53.6,29,55,53,56,37,57,38,58,46,59.3,71,61,97,63,112,64,110,66,122,67,116,68,100,69,100,71,112,72,97,73,98,74.7,116,76,107,77,99,79,105,80.6,93,82.5,90,84.3,82,85.4,83,86.7,77,88.4,66,90.3,64,91.7,55,93,36,95,23,96,0,112,0,113,16,115,10,116,31,118,52,119,9,120.5,6,121.5,18,122.7,47,124,53,125,28,126,28,127,23,128,40,129.7,46,131,49,132,60,133.4,61,135,62,136,53,137.5,48,139,54,140.4,52,141,43,142,55,143,39,144,49,146,50,147,54,148,35,149,36,150,29,151,38,152,28,153.8,27,155,25,156,28,157,19,158,26,159,19,160.6,17,162,25,163,11,165,12,167,20,168,15,169.5,11,171,23,172,12,173,14,175,13,176,0,177,11,178.5,6,180,3],
};

const lower: Plot = {
  xMax: 150, xStep: 20, xMinor: 5, yStep: 200, yMinor: 50, yMin: -9, yMax: 917, xTitle: "Index",
  data: [1.5,64,2.6,112,4,231,5.4,275,6.5,350,8.4,422,9.4,430,10,417,10.5,428,11,500,11.8,536,13,624,14.5,720,15,760,16,770,17,808,18.3,833,19.2,828,20,838,22,883,23,811,24.5,835,26,848,27,815,28,833,29.2,833,30,795,31.2,766,32.2,808,33.3,804,34,812,35,812,36,788,37,800,38.6,790,39.7,774,40.6,740,41.6,713,42.5,703,43.6,713,44.4,724,45,709,46,729,47,683,48.7,690,50,675,51,679,52.4,658,54,630,55,624,56.4,588,59,590,60.5,574,62,552,63,505,64,536,65.3,513,66,505,69,486,70,411,71,425,72.4,472,73.8,513,75,543,76.2,532,77,459,78,425,79.2,417,80,407,81,431,82.6,449,84,457,86,442,86.6,343,86.9,234,87.3,215,88.1,174,89,343,90,400,93,377,95,342,96,344,98.4,323,99.4,295,100,250,101,253,102,241,103.2,245,104,241,106,263,107,243,108,241,109,220,110,234,112,211,113,212,114,200,115,205,117.2,189,118.5,152,120,121,121.3,133,122.5,107,124,110,125.5,105,126.5,84,128,30,129.3,44,131,42,135,46,136,60,137,50,139.6,56,141.6,52,144.7,41,147,35,150,25],
};

const box = { l: 75, r: 398, t: 25, b: 251 };

const ticks = (from: number, to: number, step: number) => {
  const out: number[] = [];
  for (let v = Math.ceil(from / step) * step; v <= to; v += step) out.push(v);
  return out;
};

const SpectralPlot = ({ plot }: { plot: Plot }) => {
  const x = (v: number) => box.l + ((v - 1) / (plot.xMax - 1)) * (box.r - box.l);
  const y = (v: number) => box.b - ((v - plot.yMin) / (plot.yMax - plot.yMin)) * (box.b - box.t);
  const pairs: string[] = [];
  for (let i = 0; i < plot.data.length; i += 2) pairs.push(`${x(plot.data[i]).toFixed(1)},${y(plot.data[i + 1]).toFixed(1)}`);
  const px = (v: number) => Math.round(v) + 0.5;
  return (
    <svg className="plot" width="420" height={plot.xTitle ? 295 : 280} fontFamily={sans} fontSize="16" fill="#111">
      <g fill="none" stroke="#111">
        <rect x={box.l + 0.5} y={box.t + 0.5} width={box.r - box.l} height={box.b - box.t} strokeWidth="1.5" />
        {ticks(1, plot.xMax, plot.xMinor).map((v) => {
          const n = v % plot.xStep === 0 ? 5 : 3;
          return <path key={v} d={`M${px(x(v))} ${box.b}v${-n}M${px(x(v))} ${box.t}v${n}`} />;
        })}
        {ticks(plot.yMin, plot.yMax, plot.yMinor).map((v) => {
          const n = v % plot.yStep === 0 ? 6 : 3;
          return <path key={v} d={`M${box.l} ${px(y(v))}h${n}M${box.r} ${px(y(v))}h${-n}`} />;
        })}
      </g>
      <text transform="translate(27 138) rotate(-90)" textAnchor="middle" fontSize="17">Data Value</text>
      <g stroke="#111" strokeWidth="0.4">
        <text x="237" y="17" textAnchor="middle">Spectral Profile</text>
        {ticks(0, plot.yMax, plot.yStep).map((v) => (
          <text key={v} x="69" y={Math.round(y(v)) + 6} textAnchor="end">{v}</text>
        ))}
        {ticks(1, plot.xMax, plot.xStep).map((v) => (
          <text key={v} x={Math.round(x(v)) + 1} y="269" textAnchor="middle">{v}</text>
        ))}
        {plot.xTitle && <text x="237" y="290" textAnchor="middle">{plot.xTitle}</text>}
      </g>
      <polyline points={pairs.join(" ")} fill="none" stroke="#ff1a1a" strokeWidth="1.2" />
    </svg>
  );
};

const TitleBar = ({ title }: { title: string }) => (
  <FloatTitle>
    <Icon name="logo" />
    <h2>{title}</h2>
    <CaptionButtons>
      {(["min", "max", "close"] as IconName[]).map((n) => (
        <CaptionButton key={n} type="button" aria-label={n}><Icon name={n} /></CaptionButton>
      ))}
    </CaptionButtons>
  </FloatTitle>
);

const ProfileWindow = ({ top, right, width, height, plot, footer }: { top: number; right: number; width: number; height: number; plot: Plot; footer?: boolean }) => (
  <FloatWindow $top={top} $right={right} $w={width} $h={height}>
    <TitleBar title="Spectral Profile (GF5_AHSI_E118.74_N39.21_..." />
    <ProfileBody>
      <ProfileMain>
        <ProfileTools>
          {([["folder", "Import"], ["save", "Export"], ["gear", "Options"]] as [IconName, string][]).map(([icon, text]) => (
            <LabelButton key={text} type="button">
              <Icon name={icon} />{text}<Icon name="caret" size={8} />
            </LabelButton>
          ))}
        </ProfileTools>
        <SpectralPlot plot={plot} />
        {footer && (
          <ProfileFooter>
            <FooterPart $before={0} $top={7}><Icon name="help" /></FooterPart>
            <FooterPart $before={94}>x:</FooterPart>
            <FooterPart $before={3} $top={0}><Select w={68} value="Unknown" label="x axis" gray /></FooterPart>
            <FooterPart $before={7}>y:</FooterPart>
            <FooterPart $before={4} $top={0}><Select w={129} value="Data Value" label="y axis" gray /></FooterPart>
            <FooterPart $before={10} $top={5}><Icon name="brush" /></FooterPart>
            <FooterPart $before={12} $top={6}><Icon name="refresh" size={14} /></FooterPart>
          </ProfileFooter>
        )}
      </ProfileMain>
      <Sash><SashHandle type="button" aria-label="Expand panel"><Icon name="play" size={11} /></SashHandle></Sash>
    </ProfileBody>
  </FloatWindow>
);

/* ---------- content ---------- */

const layers = [
  { name: "GF5_AHSI_E118.74_N39.21_20181101", on: true, selected: true },
  { name: "GF5_AHSI_E118.74_N39.21_20181101", on: true, selected: false },
  { name: "GF5_AHSI_E91.07_N29.83_20181101", on: false, selected: false },
  { name: "GF5_AHSI_E91.07_N29.83_20181101", on: false, selected: false },
];

const readouts = [
  `Geo: 39° 18′17.43″N,118° 29′47.57″E
Map: 629033.7240,4351673.6990
MGRS: 50SPJ2903451674
Proj: UTM, Zone 50 N, WGS-84`,
  `Crosshair
 Loc: 491.6872,754.1332
 Geo: 39° 17′9.45″N,118° 31′6.38″E
 Map: 630956.5500, 4349609.3151
 MGRS: 50SPJ3095749609`,
  `GF5_AHSI_E118.74_N39.21_20181101_002571_L10000023541
 Proj: *RPC* Geographic Lat/Lon, WGS-84
 File: 413.6602,494.7309
 Data: [231]`,
  `GF5_AHSI_E118.74_N39.21_20181101_002571_L10000023541
 Proj: *RPC* Geographic Lat/Lon, WGS-84
 File: 413.6602,494.7309
 Data: [55]`,
];

const SliderGroup = ({ left, right, value, field, label, before }: { left: IconName; right: IconName; value: number; field: string; label: string; before?: number }) => (
  <ToolGroup $before={before}>
    <Icon name={left} />
    <ToolGroup $before={4}><Range type="range" min={0} max={100} defaultValue={value} aria-label={label} /></ToolGroup>
    <ToolGroup $before={6}><Icon name={right} /></ToolGroup>
    <ToolGroup $before={4}><NumberField type="text" defaultValue={field} aria-label={`${label} value`} /></ToolGroup>
    <ToolGroup $before={4}><Tool icon="refresh" size={15} /></ToolGroup>
  </ToolGroup>
);

export default function App() {
  return (
    <>
      <GlobalStyle />
      <Slide>
        <SlideTitle>高分五号：VN+SW 330个通道</SlideTitle>
        <Stage>
          <Margin>.</Margin>
          <Desktop>
            <BackStrip>
              <StripBlock $h={3} />
              <StripBlock $h={14} $c="#ecd07c" />
              <StripBlock $h={6} />
              <StripBlock $h={24} $c="#1a6fc0" />
              <StripBlock $h={278} />
              <StripBlock $h={24} $c="#c6c9cc" />
            </BackStrip>
            <MainWindow>
              <MainTitle><Icon name="logo" />ENVI</MainTitle>
              <MenuBar>
                {["File", "Edit", "Display", "Placemarks", "Views", "Help"].map((m) => (
                  <MenuItem key={m} type="button"><u>{m[0]}</u>{m.slice(1)}</MenuItem>
                ))}
              </MenuBar>
              <Toolbar $h={36}>
                <ToolGroup><Tool icon="folder" /><Tool icon="clip" /><Tool icon="crop" /></ToolGroup>
                <ToolGroup $before={3}><Tool icon="pin" /></ToolGroup>
                <ToolGroup $before={4}><Tool icon="cross" w={21} look="active" /></ToolGroup>
                <ToolGroup $before={4}><Tool icon="arrow" /><Tool icon="hand" /><Tool icon="move" /><Tool icon="rotate" /><Tool icon="zoomBox" /></ToolGroup>
                <ToolGroup $before={4}><Tool icon="zoomIn" w={22} /><Tool icon="zoomOut" w={22} /><Tool icon="zoomFit" w={22} /></ToolGroup>
                <Select w={98} value="306.8% (3.1::" label="Zoom" />
                <ToolGroup $before={6}><Tool icon="upImg" w={22} /><Tool icon="upNorth" w={22} /></ToolGroup>
                <Select w={80} value="0°" label="Rotation" />
                <ToolGroup $before={3}>
                  {(["specW", "wave", "scatter", "roi", "digits"] as IconName[]).map((n) => <Tool key={n} icon={n} w={27} />)}
                </ToolGroup>
                <ToolGroup $before={5}><LabelButton type="button" $muted><Icon name="vector" />Vectors<Icon name="caret" size={8} /></LabelButton></ToolGroup>
                <ToolGroup $before={14}><LabelButton type="button"><Icon name="annot" />Annotations</LabelButton></ToolGroup>
              </Toolbar>
              <Toolbar $h={30} $bottom={4}>
                <SliderGroup before={1} left="disc" right="discLight" value={50} field="50" label="Brightness" />
                <ToolGroup $before={1}><Separator /></ToolGroup>
                <SliderGroup before={7} left="halfL" right="halfR" value={20} field="20" label="Contrast" />
                <ToolGroup $before={2}><Separator /></ToolGroup>
                <ToolGroup $before={7}><Tool icon="rect" w={21} look="sunken" /><Tool icon="ellipse" w={23} look="raised" /></ToolGroup>
                <ToolGroup $before={3}><Tool icon="gray" w={24} /></ToolGroup>
                <ToolGroup $before={3}><Select w={123} value="Optimized Linear" label="Stretch type" gray /></ToolGroup>
                <ToolGroup $before={3}><Tool icon="refresh" w={26} size={15} /><Tool icon="histo" w={27} /></ToolGroup>
                <ToolGroup $before={4}><Separator /></ToolGroup>
                <SliderGroup before={6} left="ring" right="discMid" value={10} field="10" label="Sharpen" />
              </Toolbar>
              <Workspace>
                <LayerPanel>
                  <PanelHeader>Layer Manager<Icon name="dock" /></PanelHeader>
                  <OrderButtons>
                    <OrderButton type="button" aria-label="Move up"><Icon name="up" size={10} /></OrderButton>
                    <OrderButton type="button" aria-label="Move down"><Icon name="down" size={10} /></OrderButton>
                  </OrderButtons>
                  <Tree>
                    <TreeRow><Expander type="button" aria-label="Collapse view" /><Dots $w={6} /><Icon name="eye" /><NodeName>View</NodeName></TreeRow>
                    <Branch>
                      <li>
                        <TreeRow>
                          <Dots $w={11} $before={6} /><Tick type="checkbox" id="overview" />
                          <Dots $w={3} /><Icon name="overview" size={15} /><LayerName htmlFor="overview">Overview</LayerName>
                        </TreeRow>
                      </li>
                      {layers.map((l, i) => (
                        <li key={i}>
                          <TreeRow>
                            <Expander type="button" aria-label="Collapse layer" /><Dots $w={8} />
                            <Tick type="checkbox" id={`layer${i}`} defaultChecked={l.on} />
                            <Dots $w={3} /><Icon name="raster" size={15} />
                            <LayerName htmlFor={`layer${i}`} $on={l.selected}>{l.name}</LayerName>
                          </TreeRow>
                          <TreeRow $h={17}><Elbow /><Icon name="band" size={10} /><NodeName>Band 1</NodeName></TreeRow>
                        </li>
                      ))}
                    </Branch>
                  </Tree>
                </LayerPanel>
                <MapView><SatelliteMap /></MapView>
                <ToolboxPanel />
              </Workspace>
              <StatusBar><StatusCell /><StatusCell /><StatusCell /></StatusBar>
            </MainWindow>

            <FloatWindow $top={335} $left={11} $w={347} $h={354}>
              <TitleBar title="Cursor Value" />
              <Readout>
                <ReadoutText>{readouts.map((r, i) => <div key={i}>{r}</div>)}</ReadoutText>
                <SideScroll><Icon name="scrollUp" size={9} /><Icon name="scrollDown" size={9} /></SideScroll>
                <BottomScroll><Icon name="left" size={10} /><ScrollThumb /><Icon name="right" size={10} /></BottomScroll>
              </Readout>
            </FloatWindow>

            <ProfileWindow top={1} right={4} width={441} height={340} plot={upper} />
            <ProfileWindow top={327} right={3} width={442} height={380} plot={lower} footer />
          </Desktop>
        </Stage>
      </Slide>
    </>
  );
}
